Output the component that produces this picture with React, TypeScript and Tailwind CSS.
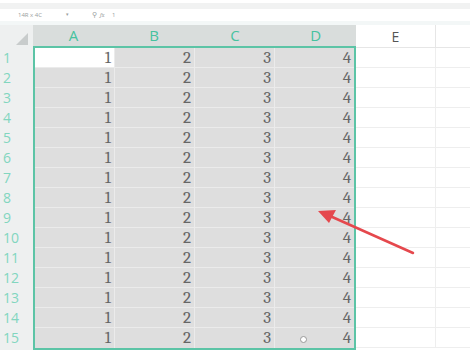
const cols = ["A", "B", "C", "D"];
const rows = Array.from({ length: 15 }, (_, i) => i + 1);

function Arrow() {
  return (
    <svg className="pointer-events-none absolute left-0 top-0" width="470" height="350">
      <line x1="413" y1="253" x2="330" y2="216" stroke="#e5484d" strokeWidth="2.5" strokeLinecap="round" />
      <polygon points="318,211 336,210 329,223" fill="#e5484d" />
    </svg>
  );
}

export default function App() {
  return (
    <div className="relative h-[350px] w-[470px] overflow-hidden bg-white font-['Open_Sans',sans-serif]">
      <div className="h-[3px] bg-white" />
      <div className="h-[6px] bg-[#f1f2f2]" />
      <div className="flex h-[12px] items-center bg-white text-[6px] text-[#9aa0a0]">
        <span className="ml-[18px] w-[48px]">14R x 4C</span>
        <span className="w-[26px] text-[5px]">▾</span>
        <span className="w-[8px] text-[7px]">⚲</span>
        <span className="w-[12px] font-serif italic">fx</span>
        <span>1</span>
      </div>
      <div className="h-[4px] bg-[#f3f7f7]" />

      {/* column header */}
      <div className="flex h-[23px]">
        <div className="relative w-[33px] bg-[#eef0f0]">
          <div className="absolute bottom-[3px] right-[5px] h-0 w-0 border-b-[12px] border-l-[12px] border-b-[#c8cccc] border-l-transparent" />
        </div>
        {cols.map((c) => (
          <div
            key={c}
            className="flex flex-1 items-center justify-center border-b-2 border-[#5cc4a6] bg-[#d9dddc] text-[15px] text-[#46c29f]"
          >
            {c}
          </div>
        ))}
        <div className="flex w-[80px] items-center justify-center border-b border-r border-[#e6e6e6] bg-white text-[14px] text-[#555]">
          E
        </div>
        <div className="w-[34px] border-b border-[#e6e6e6] bg-white" />
      </div>

      {/* body */}
      <div className="flex">
        <div className="w-[33px] bg-[#eef0f0]">
          {rows.map((r) => (
            <div key={r} className="flex h-[20px] items-center pl-[3px] text-[14px] leading-none text-[#82d6bf]">
              {r}
            </div>
          ))}
        </div>
        <div className="flex w-[323px] flex-col border-x-2 border-b-2 border-[#5cc4a6] bg-[#dedede]">
          {rows.map((r) => (
            <div key={r} className="flex h-[20px] border-b border-[#ebebeb] last:border-b-0">
              {cols.map((c, j) => (
                <div
                  key={c}
                  className={`flex flex-1 items-center justify-end border-r border-[#ebebeb] pr-[3px] font-serif text-[17px] text-[#666] last:border-r-0 ${
                    r === 1 && j === 0 ? "bg-white" : ""
                  }`}
                >
                  {j + 1}
                </div>
              ))}
            </div>
          ))}
        </div>
        <div className="flex flex-1 flex-col">
          {rows.map((r) => (
            <div key={r} className="flex h-[20px] border-b border-[#eeeeee]">
              <div className="w-[80px] border-r border-[#eeeeee]" />
              <div className="flex-1" />
            </div>
          ))}
        </div>
      </div>

      <div className="absolute left-[300px] top-[336px] h-[7px] w-[7px] rounded-full border border-[#999] bg-white" />
      <Arrow />
    </div>
  );
}
